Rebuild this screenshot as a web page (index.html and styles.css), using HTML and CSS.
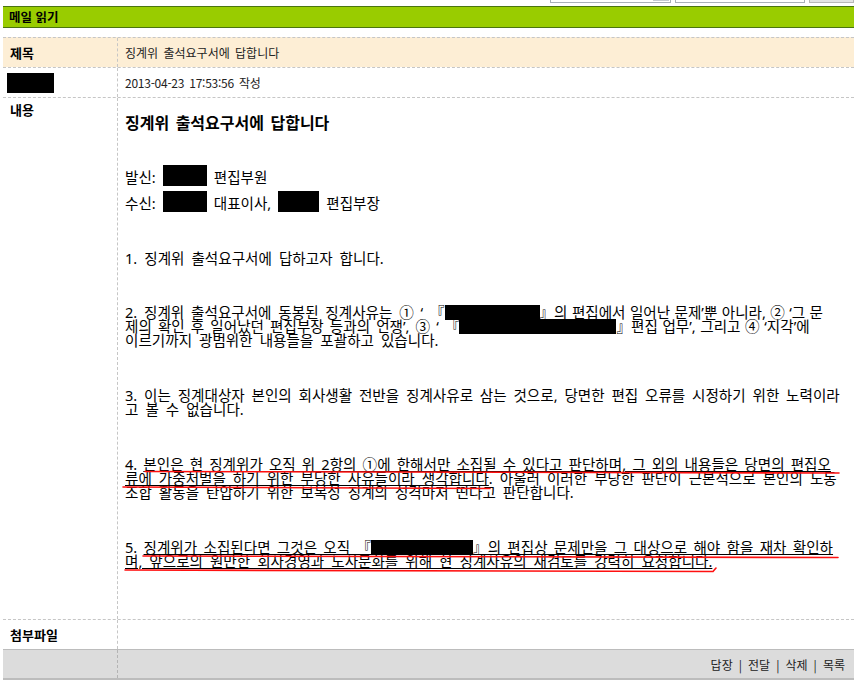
FILE: index.html
```html
<!DOCTYPE html>
<html lang="ko">
<head>
<meta charset="utf-8">
<title>메일 읽기</title>
<link rel="stylesheet" href="styles.css">
</head>
<body>
<div class="topbar">
  <div class="sel"><span class="sel-btn"></span></div>
  <div class="inp"></div>
  <div class="btn"></div>
</div>
<div class="titlebar">메일 읽기</div>
<div class="mail">
  <div class="row row-subject">
    <div class="lab">제목</div>
    <div class="val">징계위 출석요구서에 답합니다</div>
  </div>
  <div class="row row-meta">
    <div class="lab"><span class="redact redact-name"></span></div>
    <div class="val meta">2013-04-23 17:53:56 작성</div>
  </div>
  <div class="row row-body">
    <div class="lab lab-top">내용</div>
    <div class="val body">
      <div class="doc-title">징계위 출석요구서에 답합니다</div>
      <div class="para tight">
        <div class="ln">발신: <span class="redact rb rb1"></span> 편집부원</div>
      </div>
      <div class="para">
        <div class="ln">수신: <span class="redact rb rb2"></span> 대표이사, <span class="redact rb rb3"></span> 편집부장</div>
      </div>
      <div class="para p1">
        <div class="ln">1. 징계위 출석요구서에 답하고자 합니다.</div>
      </div>
      <div class="para">
        <div class="ln"><span class="pre-a">2. 징계위 출석요구서에 동봉된 징계사유는 ① ‘ 『</span><span class="redact rl rl1"></span><span class="post-a">』의 편집에서 일어난 문제’뿐 아니라, ② ‘그 문</span></div>
        <div class="ln"><span class="pre-b">제의 확인 후 일어났던 편집부장 등과의 언쟁’, ③ ‘ 『</span><span class="redact rl rl2"></span><span class="post-b">』편집 업무’, 그리고 ④ ‘지각’에</span></div>
        <div class="ln">이르기까지 광범위한 내용들을 포괄하고 있습니다.</div>
      </div>
      <div class="para">
        <div class="ln ws-3">3. 이는 징계대상자 본인의 회사생활 전반을 징계사유로 삼는 것으로, 당면한 편집 오류를 시정하기 위한 노력이라</div>
        <div class="ln">고 볼 수 없습니다.</div>
      </div>
      <div class="para">
        <div class="ln ws-4">4. <u>본인은 현 징계위가 오직 위 2항의 ①에 한해서만 소집될 수 있다고 판단하며, 그 외의 내용들은 당면의 편집오</u></div>
        <div class="ln"><u>류에 가중처벌을 하기 위한 부당한 사유들이라 생각합니다</u>. 아울러 이러한 부당한 판단이 근본적으로 본인의 노동</div>
        <div class="ln">조합 활동을 탄압하기 위한 보복성 징계의 성격마저 띤다고 판단합니다.</div>
      </div>
      <div class="para last">
        <div class="ln ws-5">5. <u>징계위가 소집된다면 그것은 오직 『<span class="redact rl rl3"></span>』의 편집상 문제만을 그 대상으로 해야 함을 재차 확인하</u></div>
        <div class="ln"><u>며, 앞으로의 원만한 회사경영과 노사문화를 위해 현 징계사유의 재검토를 강력히 요청합니다.</u></div>
      </div>
    </div>
  </div>
  <div class="row row-attach">
    <div class="lab">첨부파일</div>
    <div class="val"></div>
  </div>
  <div class="row row-foot">
    <div class="lab"></div>
    <div class="val actions">답장 | 전달 | 삭제 | 목록</div>
  </div>
</div>
<svg class="marks" width="854" height="699" viewBox="0 0 854 699" aria-hidden="true">
  <g stroke="#ff1010" stroke-width="1.6" fill="none" stroke-linecap="round">
    <path d="M145 471.5 L839 473"/>
    <path d="M123 487 L490 488.5"/>
    <path d="M143 556 L838 557.5"/>
    <path d="M125 570 L713 571.5 L716 568"/>
  </g>
</svg>
</body>
</html>
```
FILE: styles.css
```css
body {
  margin: 0;
  background: #fff;
  color: #000;
  font-family: "Noto Sans CJK KR", "Noto Sans", sans-serif;
  font-size: 12px;
  position: relative;
}

.topbar {
  height: 3px;
  overflow: hidden;
  display: flex;
  justify-content: flex-end;
  align-items: flex-end;
  gap: 4px;
  margin-bottom: 3px;
}
.sel, .inp, .btn {
  flex: none;
  height: 20px;
  box-sizing: border-box;
}
.sel {
  width: 121px;
  border: 1px solid #a9b0b8;
  display: flex;
  justify-content: flex-end;
  padding: 1px;
}
.sel-btn {
  width: 16px;
  background: #c5cad2;
}
.inp {
  width: 130px;
  border: 1px solid #a9b0b8;
}
.btn {
  width: 45px;
  border: 1px solid #b8b8b8;
  background: #e4e4e4;
}

.titlebar {
  margin-left: 3px;
  height: 20px;
  line-height: 20px;
  background: #99cc00;
  border-top: 1px solid #4a7410;
  border-bottom: 1px solid #4a7410;
  padding-left: 6px;
  font-weight: bold;
  font-size: 12.5px;
  color: #000;
}

.mail {
  margin: 9px 0 0 3px;
}
.row {
  display: flex;
  border-top: 1px dashed #c6c6c6;
}
.lab {
  flex: none;
  width: 115px;
  box-sizing: border-box;
  border-right: 1px dashed #c6c6c6;
  padding-left: 7px;
  font-weight: bold;
  font-size: 13px;
  color: #000;
}
.val {
  flex: 1;
  padding-left: 7px;
  color: #222;
  font-size: 12px;
  word-spacing: 2px;
}

.row-subject {
  background: #fdeed5;
}
.row-subject, .row-meta, .row-attach {
  height: 29px;
}
.row-subject .lab, .row-subject .val,
.row-meta .lab, .row-meta .val,
.row-attach .lab {
  display: flex;
  align-items: center;
}
.row-meta .lab {
  padding-left: 4px;
}
.meta {
  font-size: 12px;
  letter-spacing: -0.25px;
}

.redact {
  display: inline-block;
  background: #000;
}
.redact-name {
  width: 47px;
  height: 20px;
}

.row-body .lab-top {
  padding-top: 5px;
  line-height: 14px;
}
.body {
  box-sizing: border-box;
  height: 521px;
  padding-top: 15px;
  color: #000;
  font-family: "Noto Sans", "Noto Sans CJK KR", sans-serif;
  font-size: 14.58px;
  word-spacing: 3.2px;
  white-space: nowrap;
}
.doc-title {
  height: 18px;
  line-height: 18px;
  font-family: "Noto Sans CJK KR", "Noto Sans", sans-serif;
  font-size: 16px;
  font-weight: bold;
  word-spacing: 2px;
  margin-bottom: 39px;
}
.para {
  margin-bottom: 41px;
}
.para.tight {
  margin-bottom: 12px;
}
.para.p1 {
  margin-bottom: 40px;
}
.para.last {
  margin-bottom: 0;
}
.ln {
  height: 14px;
  line-height: 14px;
}
.ws-3 {
  word-spacing: 3px;
}
.ws-4 {
  word-spacing: 2.3px;
}
.ws-5 {
  word-spacing: 2.5px;
}
.pre-a {
  word-spacing: 3px;
}
.post-a {
  word-spacing: 0.6px;
}
.pre-b {
  word-spacing: 2.3px;
}
.post-b {
  word-spacing: 0.8px;
}
.body u {
  text-decoration: underline;
  text-underline-offset: 1px;
}

.rb {
  height: 21px;
  margin-top: -5px;
  margin-bottom: -2px;
  vertical-align: top;
}
.rb1, .rb2 {
  width: 44px;
}
.rb3 {
  width: 41px;
}
.rl {
  height: 15px;
  margin-bottom: -1px;
  vertical-align: top;
}
.rl1 { width: 95px; }
.rl2 { width: 157px; }
.rl3 { width: 102px; }

.row-foot {
  border-top: 1px solid #bcbcbc;
  border-bottom: 2px solid #bcbcbc;
  background: #dcdcdc;
  height: 28px;
}
.row-foot .lab {
  border-right-color: #b4b4b4;
}
.actions {
  display: flex;
  align-items: center;
  justify-content: flex-end;
  padding-right: 9px;
  font-size: 12px;
  color: #222;
  word-spacing: 2.7px;
}

.marks {
  position: absolute;
  left: 0;
  top: 0;
  pointer-events: none;
}
```
